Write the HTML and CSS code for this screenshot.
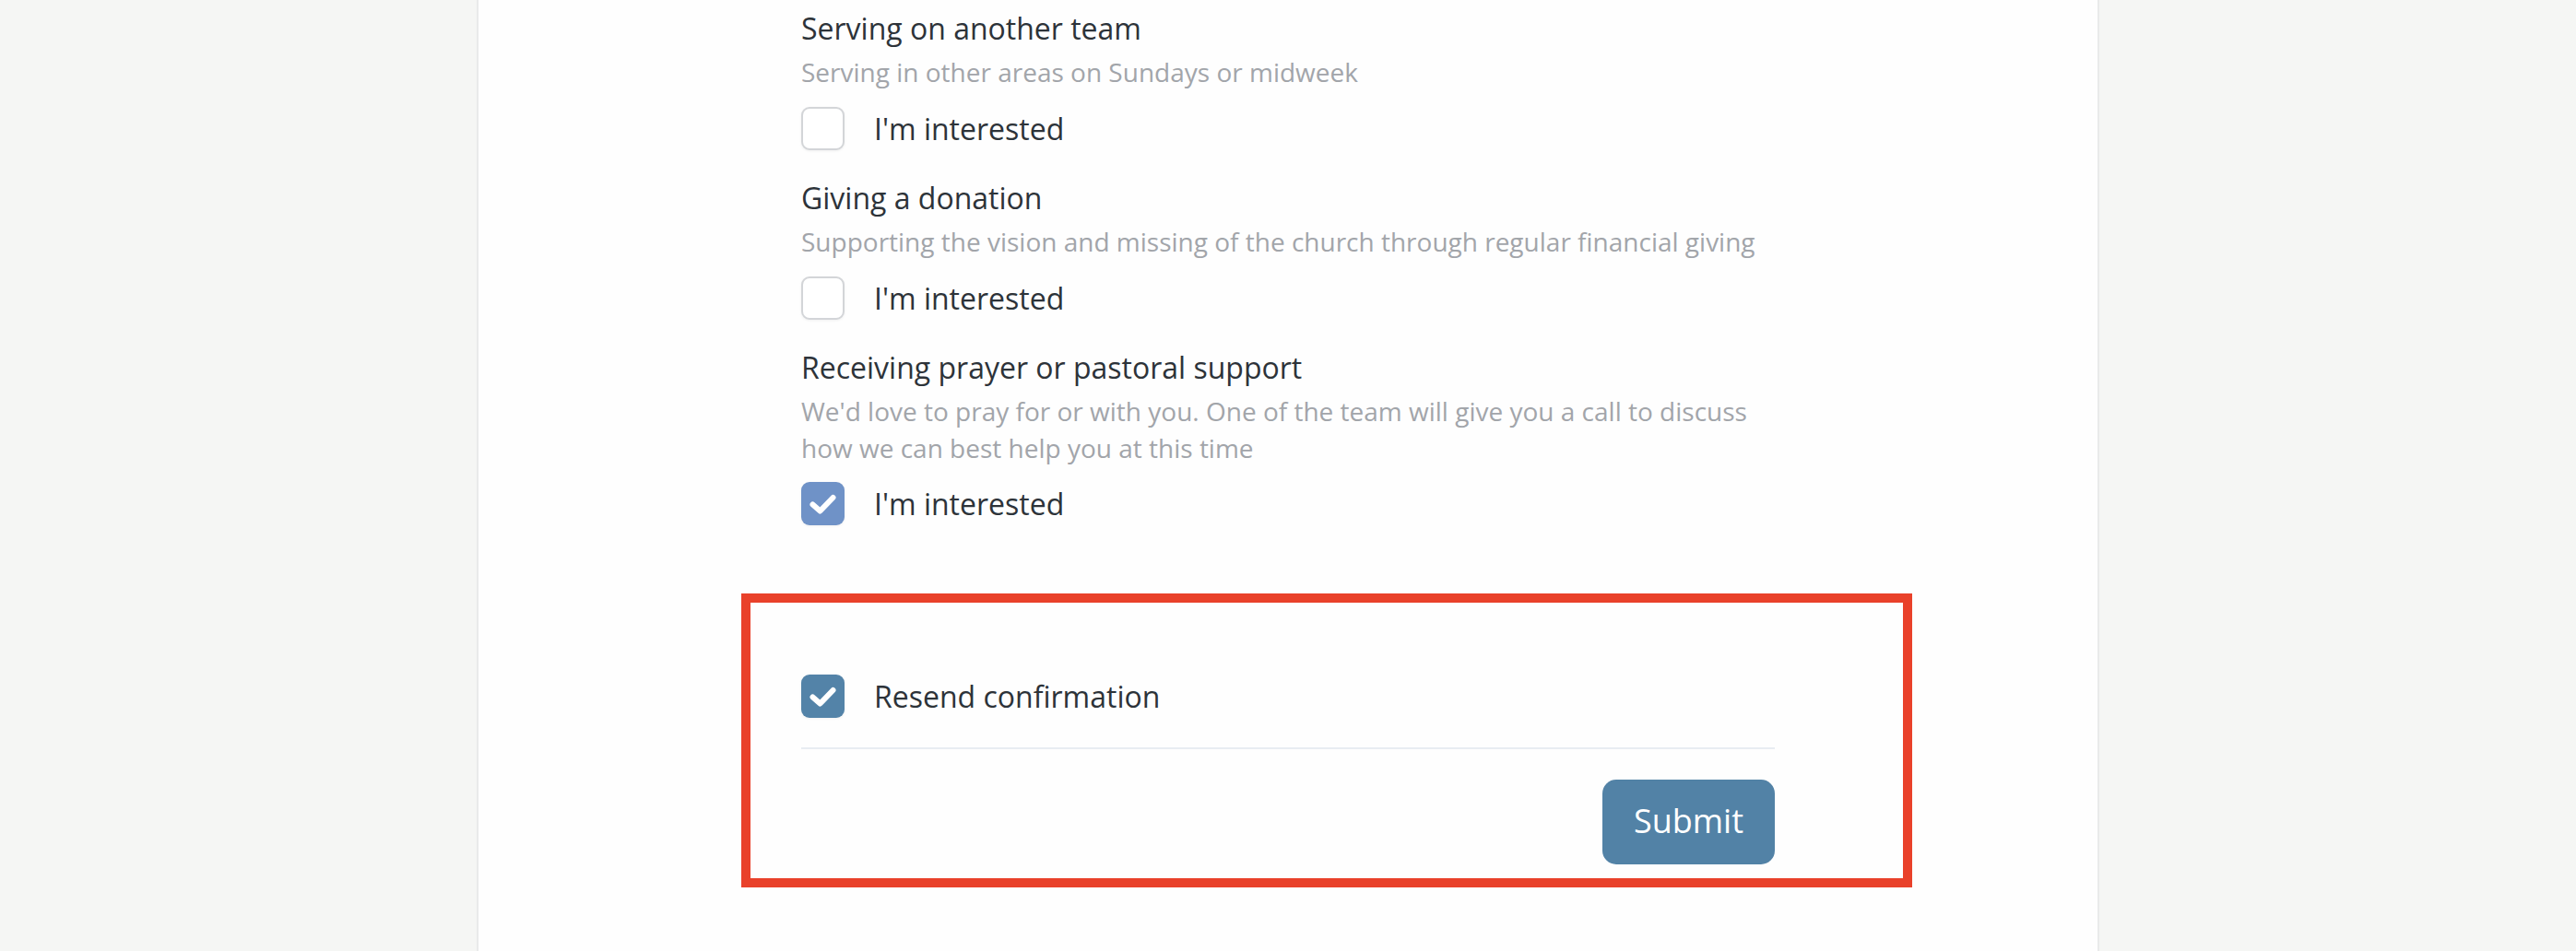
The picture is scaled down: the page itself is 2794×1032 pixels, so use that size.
FILE: index.html
```html
<!DOCTYPE html>
<html lang="en">
<head>
<meta charset="utf-8">
<title>Next steps</title>
<link rel="stylesheet" href="styles.css">
</head>
<body>
<div class="page">
  <main class="card">
    <div class="content">
      <section class="item">
        <h3 class="item-title">Serving on another team</h3>
        <p class="item-desc">Serving in other areas on Sundays or midweek</p>
        <label class="check-row">
          <span class="box"></span>
          <span class="check-label">I'm interested</span>
        </label>
      </section>
      <section class="item">
        <h3 class="item-title">Giving a donation</h3>
        <p class="item-desc">Supporting the vision and missing of the church through regular financial giving</p>
        <label class="check-row">
          <span class="box"></span>
          <span class="check-label">I'm interested</span>
        </label>
      </section>
      <section class="item">
        <h3 class="item-title">Receiving prayer or pastoral support</h3>
        <p class="item-desc">We'd love to pray for or with you. One of the team will give you a call to discuss<br>how we can best help you at this time</p>
        <label class="check-row">
          <span class="box box-checked box-light">
            <svg viewBox="0 0 47 47" class="tick"><polyline points="12.5,24.5 20.5,31.5 34.5,17" /></svg>
          </span>
          <span class="check-label">I'm interested</span>
        </label>
      </section>

      <div class="footer">
        <label class="check-row">
          <span class="box box-checked box-dark">
            <svg viewBox="0 0 47 47" class="tick"><polyline points="12.5,24.5 20.5,31.5 34.5,17" /></svg>
          </span>
          <span class="check-label">Resend confirmation</span>
        </label>
        <div class="divider"></div>
        <div class="actions">
          <button class="submit" type="button">Submit</button>
        </div>
      </div>
    </div>
    <div class="highlight"></div>
  </main>
</div>
</body>
</html>
```

FILE: styles.css
```css
* {
  box-sizing: border-box;
}

html, body {
  margin: 0;
  padding: 0;
}

body {
  background: #f5f6f4;
  font-family: "Open Sans", "Noto Sans", "Liberation Sans", sans-serif;
  color: #2d3339;
  height: 1032px;
  overflow: hidden;
}

.page {
  height: 1032px;
  display: flex;
  justify-content: center;
}

.card {
  position: relative;
  width: 1760px;
  height: 1032px;
  background: #fefefe;
  border-left: 2px solid #e9eaea;
  border-right: 2px solid #e9eaea;
}

.content {
  width: 1056px;
  margin: 0 auto;
  padding-top: 9px;
  display: flex;
  flex-direction: column;
}

.item {
  display: flex;
  flex-direction: column;
  margin-bottom: 30px;
}

.item-title {
  margin: 0;
  font-size: 32px;
  line-height: 44px;
  font-weight: 400;
  color: #2d3339;
}

.item-desc {
  margin: 5px 0 0;
  font-size: 28px;
  line-height: 40px;
  color: #a2a5aa;
}

.check-row {
  display: flex;
  align-items: center;
  gap: 32px;
  margin-top: 18px;
  height: 47px;
}

.item:nth-child(3) .check-row {
  margin-top: 17px;
}

.box {
  flex: none;
  width: 47px;
  height: 47px;
  border: 2px solid #d3d5d8;
  border-radius: 9px;
  background: #fff;
  box-shadow: 0 1px 3px rgba(0, 0, 0, 0.06);
  display: flex;
  align-items: center;
  justify-content: center;
}

.box-checked {
  border: none;
}

.box-light {
  background: #6f92c7;
}

.box-dark {
  background: #5383a8;
}

.tick {
  width: 47px;
  height: 47px;
  display: block;
}

.tick polyline {
  fill: none;
  stroke: #ffffff;
  stroke-width: 6;
  stroke-linecap: round;
  stroke-linejoin: round;
}

.check-label {
  font-size: 32px;
  line-height: 47px;
  color: #2d3339;
}

.footer {
  padding-top: 132px;
  display: flex;
  flex-direction: column;
}

.footer .check-row {
  margin-top: 0;
}

.divider {
  margin-top: 32px;
  height: 2px;
  background: #e8edf2;
}

.actions {
  margin-top: 33px;
  display: flex;
  justify-content: flex-end;
}

.submit {
  font-family: "Open Sans", "Noto Sans", "Liberation Sans", sans-serif;
  font-size: 36px;
  line-height: 50px;
  padding: 20px 34px 22px;
  border: none;
  border-radius: 15px;
  background: #5282a6;
  color: #ffffff;
  cursor: pointer;
}

.highlight {
  position: absolute;
  left: 285px;
  top: 644px;
  width: 1270px;
  height: 319px;
  border: 10px solid #e9412a;
  pointer-events: none;
}
```
